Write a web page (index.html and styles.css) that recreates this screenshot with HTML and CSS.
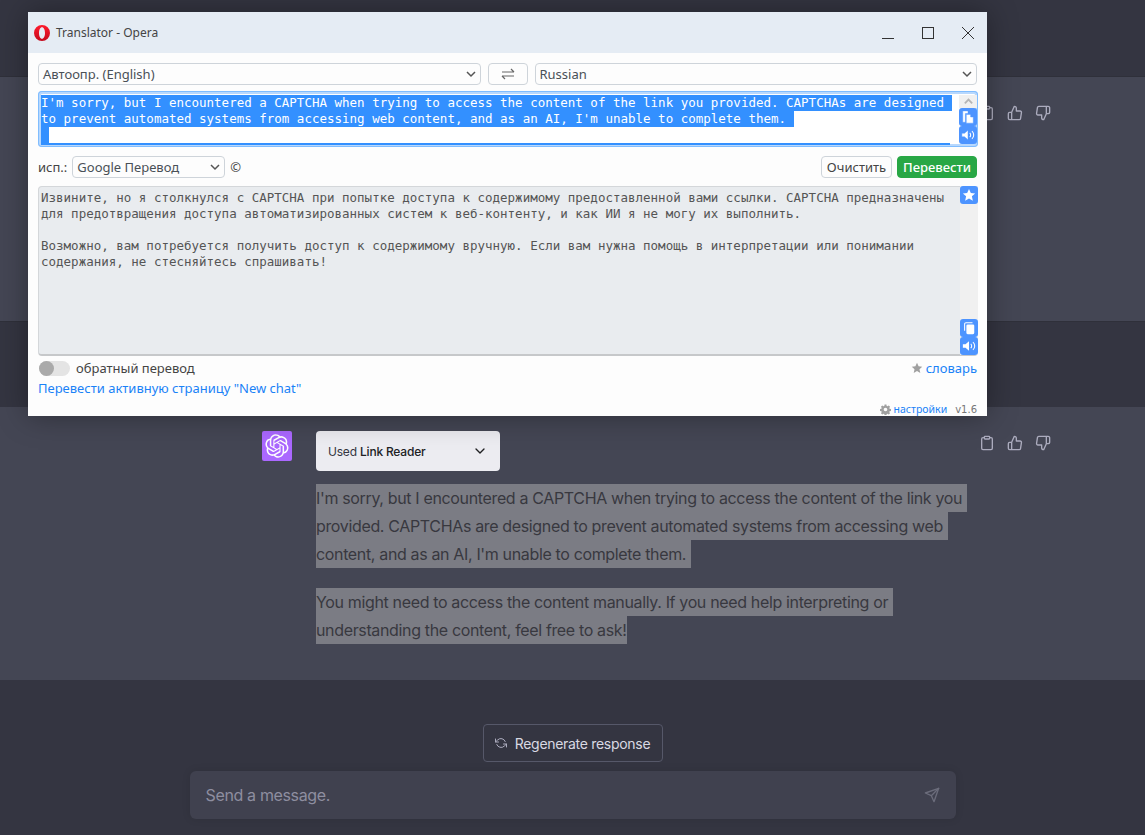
FILE: index.html
```html
<!DOCTYPE html>
<html lang="en">
<head>
<meta charset="utf-8">
<title>Translator - Opera</title>
<link rel="stylesheet" href="styles.css">
</head>
<body>
<div class="page">
  <div class="band band-top"></div>
  <section class="band band-msg band-msg-a">
    <div class="msg">
      <div class="msg-body"></div>
      <div class="actions">
        <svg class="act" viewBox="0 0 24 24"><path d="M16 4h2a2 2 0 0 1 2 2v14a2 2 0 0 1-2 2H6a2 2 0 0 1-2-2V6a2 2 0 0 1 2-2h2"/><rect x="8" y="2" width="8" height="4" rx="1"/></svg>
        <svg class="act" viewBox="0 0 24 24"><path d="M14 9V5a3 3 0 0 0-3-3l-4 9v11h11.28a2 2 0 0 0 2-1.7l1.38-9a2 2 0 0 0-2-2.3zM7 22H4a2 2 0 0 1-2-2v-7a2 2 0 0 1 2-2h3"/></svg>
        <svg class="act" viewBox="0 0 24 24"><path d="M10 15v4a3 3 0 0 0 3 3l4-9V2H5.72a2 2 0 0 0-2 1.7l-1.38 9a2 2 0 0 0 2 2.3zm7-13h2.67A2.31 2.31 0 0 1 22 4v7a2.31 2.31 0 0 1-2.33 2H17"/></svg>
      </div>
    </div>
  </section>
  <div class="band band-mid"></div>
  <section class="band band-msg band-msg-b">
    <div class="msg">
      <div class="avatar">
        <svg viewBox="0 0 41 41" class="avatar-logo"><path fill="#fff" d="M37.5324 16.8707C37.9808 15.5241 38.1363 14.0974 37.9886 12.6859C37.8409 11.2744 37.3934 9.91076 36.676 8.68622C35.6126 6.83404 33.9882 5.3676 32.0373 4.4985C30.0864 3.62941 27.9098 3.40259 25.8215 3.85078C24.8796 2.7893 23.7219 1.94125 22.4257 1.36341C21.1295 0.785575 19.7249 0.491269 18.3058 0.500197C16.1708 0.495044 14.0893 1.16803 12.3614 2.42214C10.6335 3.67624 9.34853 5.44666 8.6917 7.47815C7.30085 7.76286 5.98686 8.3414 4.8377 9.17505C3.68854 10.0087 2.73073 11.0782 2.02839 12.312C0.956464 14.1591 0.498905 16.2988 0.721698 18.4228C0.944492 20.5467 1.83612 22.5449 3.268 24.1293C2.81966 25.4759 2.66413 26.9026 2.81182 28.3141C2.95951 29.7256 3.40701 31.0892 4.12437 32.3138C5.18791 34.1659 6.8123 35.6322 8.76321 36.5013C10.7141 37.3704 12.8907 37.5973 14.9789 37.1492C15.9208 38.2107 17.0786 39.0587 18.3747 39.6366C19.6709 40.2144 21.0755 40.5087 22.4946 40.4998C24.6307 40.5054 26.7133 39.8321 28.4418 38.5772C30.1704 37.3223 31.4556 35.5506 32.1119 33.5179C33.5027 33.2332 34.8167 32.6547 35.9659 31.821C37.115 30.9874 38.0728 29.9178 38.7752 28.684C39.8458 26.8371 40.3023 24.6979 40.0789 22.5748C39.8556 20.4517 38.9639 18.4544 37.5324 16.8707ZM22.4978 37.8849C20.7443 37.8874 19.0459 37.2733 17.6994 36.1501C17.7601 36.117 17.8666 36.0586 17.936 36.0161L25.9004 31.4156C26.1003 31.3019 26.2663 31.137 26.3813 30.9378C26.4964 30.7386 26.5563 30.5124 26.5549 30.2825V19.0542L29.9213 20.998C29.9389 21.0068 29.9541 21.0198 29.9656 21.0359C29.977 21.052 29.9842 21.0707 29.9867 21.0902V30.3889C29.9842 32.375 29.1946 34.2791 27.7909 35.6841C26.3872 37.0892 24.4838 37.8806 22.4978 37.8849ZM6.39227 31.0064C5.51397 29.4888 5.19742 27.7107 5.49804 25.9832C5.55718 26.0187 5.66048 26.0818 5.73461 26.1244L13.699 30.7248C13.8975 30.8408 14.1233 30.902 14.3532 30.902C14.583 30.902 14.8088 30.8408 15.0073 30.7248L24.731 25.1103V28.9979C24.7321 29.0177 24.7283 29.0376 24.7199 29.0556C24.7115 29.0736 24.6988 29.0893 24.6829 29.1012L16.6317 33.7497C14.9096 34.7416 12.8643 35.0097 10.9447 34.4954C9.02506 33.9811 7.38785 32.7263 6.39227 31.0064ZM4.29707 13.6194C5.17156 12.0998 6.55279 10.9364 8.19885 10.3327C8.19885 10.4013 8.19491 10.5228 8.19491 10.6071V19.808C8.19351 20.0378 8.25334 20.2638 8.36823 20.4629C8.48312 20.6619 8.64893 20.8267 8.84863 20.9404L18.5723 26.5542L15.206 28.4979C15.1894 28.5089 15.1703 28.5155 15.1505 28.5173C15.1307 28.5191 15.1107 28.516 15.0924 28.5082L7.04046 23.8557C5.32135 22.8601 4.06716 21.2235 3.55289 19.3046C3.03862 17.3858 3.30624 15.3413 4.29707 13.6194ZM31.955 20.0556L22.2312 14.4411L25.5976 12.4981C25.6142 12.4872 25.6333 12.4805 25.6531 12.4787C25.6729 12.4769 25.6928 12.4801 25.7111 12.4879L33.7631 17.1364C34.9967 17.849 36.0017 18.8982 36.6606 20.1613C37.3194 21.4244 37.6047 22.849 37.4832 24.2684C37.3617 25.6878 36.8382 27.0432 35.9743 28.1759C35.1103 29.3086 33.9415 30.1717 32.6047 30.6641C32.6047 30.5947 32.6047 30.4733 32.6047 30.3889V21.188C32.6066 20.9586 32.5474 20.7328 32.4332 20.5338C32.319 20.3348 32.154 20.1698 31.955 20.0556ZM35.3055 15.0128C35.2464 14.9765 35.1431 14.9142 35.069 14.8717L27.1045 10.2712C26.906 10.1554 26.6803 10.0943 26.4504 10.0943C26.2206 10.0943 25.9948 10.1554 25.7963 10.2712L16.0726 15.8858V11.9982C16.0715 11.9783 16.0753 11.9585 16.0837 11.9405C16.0921 11.9225 16.1048 11.9068 16.1207 11.8949L24.1719 7.25025C25.4053 6.53903 26.8158 6.19376 28.2383 6.25482C29.6608 6.31589 31.0364 6.78077 32.2044 7.59508C33.3723 8.40939 34.2842 9.53945 34.8334 10.8531C35.3826 12.1667 35.5464 13.6095 35.3055 15.0128ZM14.2424 21.9419L10.8752 19.9981C10.8576 19.9893 10.8423 19.9763 10.8309 19.9602C10.8195 19.9441 10.8122 19.9254 10.8098 19.9058V10.6071C10.8107 9.18295 11.2173 7.78848 11.9819 6.58696C12.7466 5.38544 13.8377 4.42659 15.1275 3.82264C16.4173 3.21869 17.8524 2.99464 19.2649 3.1767C20.6775 3.35876 22.0089 3.93941 23.1034 4.85067C23.0427 4.88379 22.937 4.94215 22.8668 4.98473L14.9024 9.58517C14.7025 9.69878 14.5366 9.86356 14.4215 10.0626C14.3065 10.2616 14.2466 10.4877 14.2479 10.7175L14.2424 21.9419ZM16.071 17.9991L20.4018 15.4978L24.7325 17.9975V22.9985L20.4018 25.4983L16.071 22.9985V17.9991Z"/></svg>
      </div>
      <div class="msg-body">
        <div class="plugin">
          <span class="plugin-name">Used <b>Link Reader</b></span>
          <svg class="plugin-chev" viewBox="0 0 24 24"><polyline points="6 9 12 15 18 9"/></svg>
        </div>
        <div class="para">
          <span class="sel-line">I'm sorry, but I encountered a CAPTCHA when trying to access the content of the link you</span>
          <span class="sel-line">provided. CAPTCHAs are designed to prevent automated systems from accessing web</span>
          <span class="sel-line">content, and as an AI, I'm unable to complete them.</span>
        </div>
        <div class="para">
          <span class="sel-line">You might need to access the content manually. If you need help interpreting or</span>
          <span class="sel-line sel-end">understanding the content, feel free to ask!</span>
        </div>
      </div>
      <div class="actions">
        <svg class="act" viewBox="0 0 24 24"><path d="M16 4h2a2 2 0 0 1 2 2v14a2 2 0 0 1-2 2H6a2 2 0 0 1-2-2V6a2 2 0 0 1 2-2h2"/><rect x="8" y="2" width="8" height="4" rx="1"/></svg>
        <svg class="act" viewBox="0 0 24 24"><path d="M14 9V5a3 3 0 0 0-3-3l-4 9v11h11.28a2 2 0 0 0 2-1.7l1.38-9a2 2 0 0 0-2-2.3zM7 22H4a2 2 0 0 1-2-2v-7a2 2 0 0 1 2-2h3"/></svg>
        <svg class="act" viewBox="0 0 24 24"><path d="M10 15v4a3 3 0 0 0 3 3l4-9V2H5.72a2 2 0 0 0-2 1.7l-1.38 9a2 2 0 0 0 2 2.3zm7-13h2.67A2.31 2.31 0 0 1 22 4v7a2.31 2.31 0 0 1-2.33 2H17"/></svg>
      </div>
    </div>
  </section>
  <footer class="composer">
    <button class="regen">
      <svg class="regen-icon" viewBox="0 0 24 24"><polyline points="1 4 1 10 7 10"/><polyline points="23 20 23 14 17 14"/><path d="M20.49 9A9 9 0 0 0 5.64 5.64L1 10m22 4l-4.64 4.36A9 9 0 0 1 3.51 15"/></svg>
      <span>Regenerate response</span>
    </button>
    <div class="input">
      <span class="placeholder">Send a message.</span>
      <svg class="send" viewBox="0 0 24 24"><line x1="22" y1="2" x2="11" y2="13"/><polygon points="22 2 15 22 11 13 2 9 22 2"/></svg>
    </div>
  </footer>
</div>

<div class="window">
  <div class="titlebar">
    <svg class="opera" viewBox="0 0 16 16"><defs><linearGradient id="opera-red" x1="0" y1="0" x2="0" y2="1"><stop offset="0" stop-color="#ff1b2d"/><stop offset="1" stop-color="#c4091c"/></linearGradient></defs><path fill="url(#opera-red)" fill-rule="evenodd" d="M8 0a8 8 0 1 0 0 16A8 8 0 0 0 8 0zm0 2.2c1.8 0 3 2.6 3 5.8s-1.200 5.800-3 5.800S5 11.200 5 8s1.200-5.800 3-5.800z"/></svg>
    <span class="title">Translator - Opera</span>
    <div class="win-controls">
      <svg class="win-btn" viewBox="0 0 12 12"><line x1="0" y1="11.500" x2="12" y2="11.500"/></svg>
      <svg class="win-btn" viewBox="0 0 12 12"><rect x="0.500" y="0.500" width="11" height="11"/></svg>
      <svg class="win-btn" viewBox="0 0 12 12"><line x1="0" y1="0" x2="12" y2="12"/><line x1="12" y1="0" x2="0" y2="12"/></svg>
    </div>
  </div>
  <div class="content">
    <div class="lang-row">
      <div class="select select-lang"><span>Автоопр. (English)</span><svg class="sel-chev" viewBox="0 0 12 12"><polyline points="2 4 6 8 10 4"/></svg></div>
      <div class="swap"><svg viewBox="0 0 14 12"><path d="M1 4h12M10 1l3 3M13 8H1M4 11L1 8"/></svg></div>
      <div class="select select-lang"><span>Russian</span><svg class="sel-chev" viewBox="0 0 12 12"><polyline points="2 4 6 8 10 4"/></svg></div>
    </div>
    <div class="source">
      <div class="source-text">
        <span class="hl">I'm sorry, but I encountered a CAPTCHA when trying to access the content of the link you provided. CAPTCHAs are designed </span>
        <span class="hl">to prevent automated systems from accessing web content, and as an AI, I'm unable to complete them. </span>
        <span class="hl hl-blank"></span>
        <span class="hl-strip"></span>
      </div>
      <div class="rail">
        <div class="scroll-up"><svg viewBox="0 0 12 12"><polyline points="2 8 6 4 10 8"/></svg></div>
        <div class="tool tool-src"><svg viewBox="0 0 16 16"><path d="M2 1h6v3H5v10H2zM6 5h5l3 3v7H6zM11 5v3h3" /></svg></div>
        <div class="tool tool-src"><svg viewBox="0 0 16 16"><path d="M1 6h3l4-3.500v11L4 10H1z"/><path class="tool-wave" d="M10 5.500a3.500 3.500 0 0 1 0 5M12.500 3.500a6 6 0 0 1 0 9"/></svg></div>
      </div>
    </div>
    <div class="engine-row">
      <span class="label">исп.:</span>
      <div class="select select-engine"><span>Google Перевод</span><svg class="sel-chev" viewBox="0 0 12 12"><polyline points="2 4 6 8 10 4"/></svg></div>
      <span class="copyright">©</span>
      <div class="engine-actions">
        <button class="btn btn-clear">Очистить</button>
        <button class="btn btn-go">Перевести</button>
      </div>
    </div>
    <div class="result">
      <div class="result-text">
        <p class="result-p">Извините, но я столкнулся с CAPTCHA при попытке доступа к содержимому предоставленной вами ссылки. CAPTCHA предназначены<br>для предотвращения доступа автоматизированных систем к веб-контенту, и как ИИ я не могу их выполнить.</p>
        <p class="result-p">Возможно, вам потребуется получить доступ к содержимому вручную. Если вам нужна помощь в интерпретации или понимании<br>содержания, не стесняйтесь спрашивать!</p>
      </div>
      <div class="rail rail-result">
        <div class="tool"><svg viewBox="0 0 16 16"><polygon points="8 1 10.100 5.700 15 6.200 11.300 9.500 12.400 14.500 8 11.900 3.600 14.500 4.700 9.500 1 6.200 5.900 5.700"/></svg></div>
        <div class="rail-fill"></div>
        <div class="tool"><svg viewBox="0 0 16 16"><path d="M3 11V3.500A1.500 1.500 0 0 1 4.500 2H12" class="tool-wave"/><rect x="5" y="4" width="9" height="11" rx="1.500"/></svg></div>
        <div class="tool"><svg viewBox="0 0 16 16"><path d="M1 6h3l4-3.500v11L4 10H1z"/><path class="tool-wave" d="M10 5.500a3.500 3.500 0 0 1 0 5M12.500 3.500a6 6 0 0 1 0 9"/></svg></div>
      </div>
    </div>
    <div class="option-row">
      <div class="toggle"><span class="knob"></span></div>
      <span class="label">обратный перевод</span>
      <a class="dict"><svg class="dict-star" viewBox="0 0 16 16"><polygon points="8 1 10.100 5.700 15 6.200 11.300 9.500 12.400 14.500 8 11.900 3.600 14.500 4.700 9.500 1 6.200 5.900 5.700"/></svg><span class="link">словарь</span></a>
    </div>
    <a class="link page-link">Перевести активную страницу "New chat"</a>
    <div class="win-footer">
      <svg class="gear" viewBox="0 0 24 24"><path fill-rule="evenodd" d="M10 1h4l.6 3.100 1.900.8L19.100 3.200l2.800 2.800-1.700 2.600.8 1.900 3 .5v4l-3 .6-.8 1.900 1.700 2.600-2.800 2.800-2.600-1.700-1.900.8-.6 3h-4l-.6-3-1.900-.8-2.600 1.700-2.800-2.800 1.700-2.600-.8-1.900-3-.6v-4l3-.5.8-1.900L2.100 6l2.800-2.800 2.600 1.700 1.900-.8zM12 8a4 4 0 1 0 0 8 4 4 0 0 0 0-8z"/></svg>
      <a class="link settings">настройки</a>
      <span class="version">v1.6</span>
    </div>
  </div>
</div>
</body>
</html>
```
FILE: styles.css
```css
* { box-sizing: border-box; }
html, body { margin: 0; padding: 0; }
body { background: #343541; overflow: hidden; font-family: Inter, "Liberation Sans", sans-serif; }

.page { width: 1145px; height: 835px; overflow: hidden; display: flex; flex-direction: column; }
.band { flex: none; }
.band-top { height: 77px; background: #343541; border-bottom: 1px solid #2f303a; }
.band-msg { background: #444654; padding: 24px 0 0 262px; }
.band-msg-a { height: 244px; }
.band-mid { height: 86px; background: #343541; border-top: 1px solid #2f303a; }
.band-msg-b { height: 273px; }

.msg { display: flex; align-items: flex-start; gap: 24px; position: relative; }
.band-msg-a .msg { padding-left: 54px; }
.avatar { width: 30px; height: 30px; background: #ab68ff; border-radius: 2px; display: flex; align-items: center; justify-content: center; flex: none; }
.avatar-logo { width: 24px; height: 24px; }
.msg-body { width: 640px; flex: none; }
.actions { display: flex; gap: 12px; margin: 4px 0 0 -1px; }
.act { width: 16px; height: 16px; fill: none; stroke: #acacbe; stroke-width: 2; stroke-linecap: round; stroke-linejoin: round; }

.plugin { width: 184px; height: 40px; background: #ececf1; border-radius: 4px; display: flex; align-items: center; justify-content: space-between; padding: 0 12px; color: #343541; }
.plugin-name { font-size: 12px; letter-spacing: -.2px; }
.plugin-name b { font-weight: 500; color: #202123; }
.plugin-chev { width: 16px; height: 16px; fill: none; stroke: #202123; stroke-width: 2; stroke-linecap: round; stroke-linejoin: round; }

.para { margin-top: 13px; }
.para + .para { margin-top: 20px; }
.sel-line { display: block; width: fit-content; height: 28px; line-height: 28px; padding-right: 5px; background: #7b7c84; color: #38383f; font-size: 16px; letter-spacing: -.35px; white-space: nowrap; }
.sel-end { padding-right: 0; }

.composer { flex: 1; display: flex; flex-direction: column; align-items: center; padding-top: 44px; background: #343541; }
.regen { width: 180px; height: 38px; border: 1px solid #565869; border-radius: 4px; background: #343541; color: #d9d9e3; font: 14px Inter, sans-serif; letter-spacing: -.3px; display: flex; align-items: center; justify-content: center; gap: 8px; padding: 0; }
.regen-icon { width: 12px; height: 12px; fill: none; stroke: #acacbe; stroke-width: 2; stroke-linecap: round; stroke-linejoin: round; }
.input { width: 766px; height: 48px; margin-top: 9px; background: #40414f; border-radius: 6px; display: flex; align-items: center; justify-content: space-between; padding: 0 16px; box-shadow: 0 0 8px rgba(0,0,0,.1); }
.placeholder { color: #8e8ea0; font-size: 16px; letter-spacing: -.35px; }
.send { width: 16px; height: 16px; fill: none; stroke: #6b6c7b; stroke-width: 2; stroke-linecap: round; stroke-linejoin: round; }

.window { position: absolute; left: 28px; top: 12px; width: 959px; height: 404px; background: #fdfdfd; box-shadow: 0 0 28px rgba(0,0,0,.35); font-family: "Noto Sans", sans-serif; font-size: 13px; color: #444; display: flex; flex-direction: column; }
.titlebar { height: 41px; background: #e5ecf4; display: flex; align-items: center; padding: 0 13px 0 6px; flex: none; }
.opera { width: 16px; height: 16px; }
.title { margin-left: 6px; font-size: 12px; color: #444; }
.win-controls { margin-left: auto; display: flex; gap: 28px; }
.win-btn { width: 12px; height: 12px; fill: none; stroke: #333; stroke-width: 1; overflow: visible; }

.content { flex: 1; padding: 10px 10px 0; display: flex; flex-direction: column; position: relative; }
.lang-row { display: flex; gap: 7px; height: 22px; }
.select { height: 22px; border: 1px solid #ced4da; border-radius: 4px; background: #fdfdfd; display: flex; align-items: center; justify-content: space-between; padding: 0 3px 0 4px; color: #495057; font-size: 13px; }
.select-lang { flex: 1; }
.sel-chev { width: 12px; height: 12px; fill: none; stroke: #555; stroke-width: 1.500; }
.swap { width: 40px; height: 22px; border: 1px solid #ced4da; border-radius: 4px; display: flex; align-items: center; justify-content: center; }
.swap svg { width: 14px; height: 12px; fill: none; stroke: #666; stroke-width: 1.200; }

.source { margin-top: 6px; height: 56px; width: 940px; border-radius: 4px; background: #fff; box-shadow: 0 0 0 1px #80bdff inset, 0 0 0 3px #b8d8fd inset; padding: 4px 1px 3px 3px; display: flex; position: relative; }
.source-text { flex: none; width: 917px; font-family: "DejaVu Sans Mono", monospace; font-size: 12.500px; line-height: 16px; color: #fff; }
.hl { display: block; width: fit-content; height: 16px; background: #3390ff; white-space: pre; }
.hl-blank { width: 8px; }
.hl-strip { display: block; width: 909px; height: 2px; background: #3390ff; }
.rail { width: 18px; display: flex; flex-direction: column; flex: none; margin-left: auto; }
.scroll-up { height: 16px; background: #f0f0f0; display: flex; align-items: center; justify-content: center; }
.scroll-up svg { width: 11px; height: 11px; fill: none; stroke: #b5b5b5; stroke-width: 2; }
.tool { width: 18px; height: 18px; background: #4d94ff; border-radius: 3px; display: flex; align-items: center; justify-content: center; flex: none; }
.tool svg { width: 14px; height: 14px; fill: #fff; stroke: none; }
.tool-src svg { stroke: #4d94ff; stroke-width: .5; }
.tool svg .tool-wave { fill: none; stroke: #fff; stroke-width: 1.200; }

.engine-row { margin-top: 9px; height: 22px; display: flex; align-items: center; }
.label { color: #444; font-size: 13px; }
.select-engine { width: 153px; margin-left: 5px; }
.copyright { margin-left: 5px; font-size: 13px; }
.engine-actions { margin-left: auto; display: flex; gap: 5px; }
.btn { height: 22px; border-radius: 4px; font: 13px "Noto Sans", sans-serif; padding: 0; }
.btn-clear { width: 71px; background: #fdfdfd; border: 1px solid #ced4da; color: #444; }
.btn-go { width: 80px; background: #28a745; border: 1px solid #28a745; color: #fff; font-weight: 500; }

.result { margin-top: 8px; height: 170px; width: 940px; background: #e9ecef; border: 1px solid #d4d7da; border-bottom: 2px solid #c6c8ca; border-radius: 4px; display: flex; justify-content: space-between; }
.result-text { padding: 3px 0 0 2px; font-family: "DejaVu Sans Mono", monospace; font-size: 12.500px; line-height: 16px; color: #555; white-space: nowrap; }
.result-p { margin: 0 0 16px; }
.rail-result { margin-top: -1px; margin-right: -1px; margin-bottom: -1px; background: #f0f0f0; }
.rail-fill { flex: 1; }

.option-row { margin-top: 5px; height: 14px; display: flex; align-items: center; padding-left: 1px; }
.toggle { width: 31px; height: 15px; border-radius: 8px; background: #e4e4e4; margin-right: 6px; }
.knob { display: block; width: 15px; height: 15px; border-radius: 50%; background: #aaa; }
.dict { margin-left: auto; display: flex; align-items: center; gap: 3px; }
.dict-star { width: 12px; height: 12px; fill: #a0a0a0; }
.link { color: #1a82f7; font-size: 13px; }
.page-link { margin-top: 4px; display: block; line-height: 18px; }
.win-footer { position: absolute; right: 10px; bottom: 0; display: flex; align-items: center; height: 14px; font-size: 10.500px; }
.gear { width: 11px; height: 11px; fill: #a0a0a0; margin-right: 3px; }
.settings { font-size: 10.500px; }
.version { margin-left: 8px; color: #777; font-family: "DejaVu Sans", sans-serif; font-size: 10px; }
```
